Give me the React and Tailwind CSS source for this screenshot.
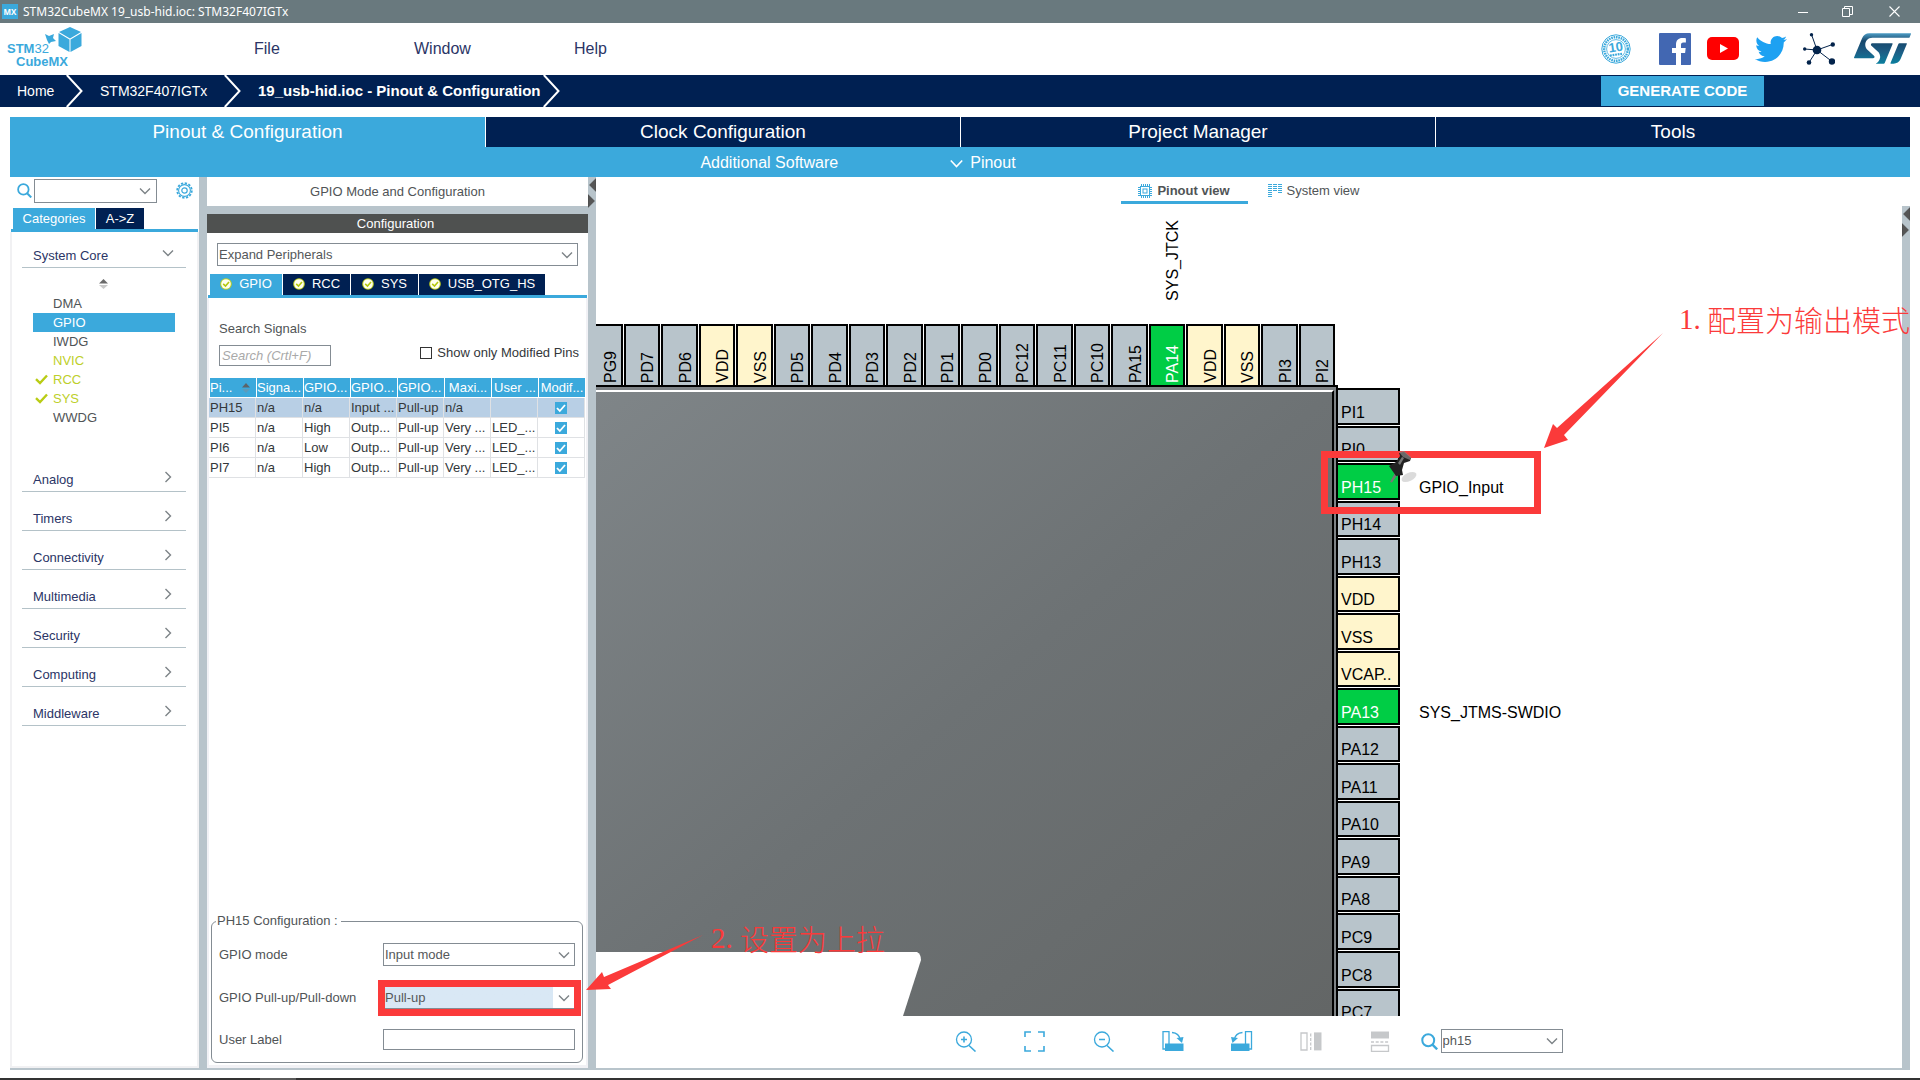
import React from "react";
import { FaTwitter } from "react-icons/fa";
import { SiStmicroelectronics } from "react-icons/si";

const SOCIAL_BLUE = "#3ba9dc";

function Chevron({ className = "" }) {
  return (
    <svg viewBox="0 0 12 12" className={className} width="12" height="12" fill="none" stroke="#7d8387" strokeWidth="1.4">
      <path d="M1 3.5 6 8.5 11 3.5" />
    </svg>
  );
}

function SearchIcon({ size = 15 }) {
  return (
    <svg viewBox="0 0 16 16" width={size} height={size} fill="none" stroke={SOCIAL_BLUE} strokeWidth="1.9">
      <circle cx="6.8" cy="6.8" r="5.6" />
      <path d="m10.8 11 4.4 4.4" strokeWidth="2.2" />
    </svg>
  );
}

function Select({ label, id, value, className = "", selectClass = "", chevronClass = "right-[4px]" }) {
  return (
    <div className={"relative " + className}>
      <select
        id={id}
        aria-label={label}
        defaultValue={value}
        className={"block h-full w-full appearance-none border border-[#848c93] bg-white pl-[1px] text-[13px] leading-4 text-[#55585a] " + selectClass}
      >
        <option>{value}</option>
      </select>
      <Chevron className={"pointer-events-none absolute top-1/2 -translate-y-1/2 " + chevronClass} />
    </div>
  );
}

function TitleBar() {
  return (
    <div className="flex h-[23px] shrink-0 items-center bg-[#69797e] pl-[2px] text-white">
      <span className="flex h-[15px] w-[16px] items-center justify-center bg-[#3ba9dc] font-['Open_Sans',sans-serif] text-[8px] font-bold">MX</span>
      <h1 className="ml-[5px] flex-1 font-['Noto_Sans',sans-serif] text-[12px] leading-5">STM32CubeMX 19_usb-hid.ioc: STM32F407IGTx</h1>
      <button aria-label="Minimize" className="flex h-full w-[45px] items-center justify-center">
        <svg width="10" height="10" viewBox="0 0 10 10" stroke="#fff"><path d="M0 5.5h10" /></svg>
      </button>
      <button aria-label="Restore" className="flex h-full w-[45px] items-center justify-center">
        <svg width="11" height="11" viewBox="0 0 11 11" fill="none" stroke="#fff"><path d="M.5 2.5h7v8h-7zM2.5 2.5v-2h8v8h-3" /></svg>
      </button>
      <button aria-label="Close" className="flex h-full w-[50px] items-center justify-center pr-[2px]">
        <svg width="11" height="11" viewBox="0 0 11 11" stroke="#fff" strokeWidth="1.1"><path d="M.5.5l10 10M10.500.5l-10 10" /></svg>
      </button>
    </div>
  );
}

function CubeLogo() {
  return (
    <svg width="78" height="44" viewBox="0 0 78 44" fill="#3ba9dc" fontFamily="'Liberation Sans', sans-serif" fontSize="13">
      <text x="0" y="26"><tspan fontWeight="700">STM</tspan>32</text>
      <text x="9" y="39" fontWeight="700">CubeMX</text>
      <path d="M63 0 74 5 63 11.500 52 5z" />
      <path d="M51.500 6 62.500 12.500V25L51.500 19z" />
      <path d="M74.500 6 63.500 12.500V25L74.500 19z" />
      <path d="M38 7l4 2 5-2-1 4 3 3-5 1-2 2-2-4z" />
    </svg>
  );
}

function Header() {
  return (
    <header className="flex h-[52px] shrink-0 items-center bg-white">
      <div className="w-[254px] pl-[7px]"><CubeLogo /></div>
      <nav className="flex flex-1 pb-[1px] text-[16px] leading-5 text-[#2b3566]">
        <button className="w-[160px] text-left">File</button>
        <button className="w-[160px] text-left">Window</button>
        <button className="text-left">Help</button>
      </nav>
      <div className="flex items-center pr-[9px] pb-[1px]">
        <a href="#anniversary" aria-label="10 years" className="mr-[28px]">
          <svg width="30" height="30" viewBox="0 0 30 30" fill="none" stroke="#3ba9dc">
            <circle cx="15" cy="15" r="14.200" strokeWidth="1" />
            <circle cx="15" cy="15" r="11.800" strokeWidth="2.400" strokeDasharray="1.600 .8" />
            <circle cx="15" cy="15" r="9.400" strokeWidth=".8" />
            <text x="15" y="17.500" transform="rotate(-8 15 15)" textAnchor="middle" fontFamily="'Liberation Sans', sans-serif" fontWeight="700" fontSize="13" fill="#3ba9dc" stroke="none">10</text>
            <path d="M9 21.500l12-1.700" strokeWidth="2.200" strokeDasharray="1.800 .8" />
          </svg>
        </a>
        <a href="#facebook" aria-label="Facebook" className="mr-[16px]">
          <svg width="32" height="32" viewBox="0 0 32 32">
            <rect width="32" height="32" rx="1" fill="#4267b2" />
            <path d="M17 32V20h-4v-5h4v-3.500C17 7.300 19.500 5 23.300 5c1.700 0 3.100.1 3.600.2v4.300h-2.500c-2 0-2.400 1-2.400 2.300V15h4.700l-.6 5H22v12z" fill="#fff" />
          </svg>
        </a>
        <a href="#youtube" aria-label="YouTube" className="mr-[16px]">
          <svg width="32" height="23" viewBox="0 0 32 23">
            <rect width="32" height="23" rx="5" fill="#f00" />
            <path d="M13 7v9l8-4.500z" fill="#fff" />
          </svg>
        </a>
        <a href="#twitter" aria-label="Twitter" className="mr-[16px]"><FaTwitter size={32} color="#1da1f2" /></a>
        <a href="#community" aria-label="Community" className="mr-[19px]">
          <svg width="32" height="32" viewBox="0 0 32 32" fill="#03234b" stroke="#03234b">
            <path d="M8.500 1.500 14 17l15.500-5.500M1.500 16 14 17l15 11.500M14 17 6 29.500" fill="none" />
            <g stroke="none"><circle cx="14" cy="17" r="4.300" /><circle cx="8.500" cy="1.800" r="1.700" /><circle cx="29.800" cy="11.500" r="2.200" /><circle cx="1.700" cy="16" r="1.700" /><circle cx="6" cy="29.500" r="2.300" /><circle cx="29" cy="28.500" r="3.200" /></g>
          </svg>
        </a>
        <a href="#st" aria-label="STMicroelectronics" className="flex h-[32px] items-center">
          <svg width="0" height="0"><defs><linearGradient id="st" x1="0" y1="0" x2="0" y2="1"><stop offset="0" stopColor="#4d9cc4" /><stop offset=".25" stopColor="#17476b" /><stop offset=".6" stopColor="#1d5c84" /><stop offset="1" stopColor="#0b7f9e" /></linearGradient></defs></svg>
          <SiStmicroelectronics size={57} fill="url(#st)" />
        </a>
      </div>
    </header>
  );
}

function CrumbArrow() {
  return (
    <svg width="17" height="32" viewBox="0 0 17 32" fill="none" stroke="#fff" strokeWidth="2" className="shrink-0"><path d="M.8 0 15.500 16 .8 32" /></svg>
  );
}

function Breadcrumbs() {
  return (
    <nav className="flex h-[32px] shrink-0 items-center bg-[#002052] text-[14px] text-white">
      <a href="#home" className="w-[66px] pl-[17px]">Home</a>
      <CrumbArrow />
      <a href="#mcu" className="w-[141px] pl-[17px]">STM32F407IGTx</a>
      <CrumbArrow />
      <a href="#pinout" className="w-[302px] pl-[17px] text-[15px] font-bold whitespace-nowrap">19_usb-hid.ioc - Pinout &amp; Configuration</a>
      <CrumbArrow />
      <button className="mr-[156px] ml-auto h-[30px] w-[163px] bg-[#3ba9dc] text-[15px] font-bold">GENERATE CODE</button>
    </nav>
  );
}

const MAIN_TABS = ["Pinout & Configuration", "Clock Configuration", "Project Manager", "Tools"];

function MainTabs() {
  return (
    <div className="mx-[10px] mt-[10px] shrink-0">
      <div className="grid h-[30px] grid-cols-4">
        {MAIN_TABS.map((t, i) => (
          <button key={t} className={"border-white text-[19px] leading-[30px] text-white " + (i === 0 ? "bg-[#3ba9dc]" : "border-l bg-[#002052]")}>{t}</button>
        ))}
      </div>
      <div className="flex h-[30px] items-center justify-center gap-[112px] bg-[#3ba9dc] pt-[2px] pr-[204px] text-[16px] text-white">
        <button>Additional Software</button>
        <button className="flex items-center gap-[7px]">
          <svg width="13" height="9" viewBox="0 0 13 9" fill="none" stroke="#fff" strokeWidth="1.600"><path d="M.8 1.500 6.500 7.500 12.200 1.500" /></svg>
          Pinout
        </button>
      </div>
    </div>
  );
}

function Check() {
  return (
    <svg width="13" height="11" viewBox="0 0 13 11" fill="none" stroke="#b9cc14" strokeWidth="2.400"><path d="M1 5.200 5 9 12 1.500" /></svg>
  );
}

const CORE = [["DMA"], ["GPIO", "sel"], ["IWDG"], ["NVIC", "on"], ["RCC", "ok"], ["SYS", "ok"], ["WWDG"]];
const GROUPS = ["Analog", "Timers", "Connectivity", "Multimedia", "Security", "Computing", "Middleware"];

function Sidebar() {
  return (
    <aside className="flex w-[189px] shrink-0 flex-col">
      <div className="flex h-[31px] items-start pl-[7px]">
        <span className="pt-[6px]"><SearchIcon /></span>
        <Select label="Search peripherals" value="" className="mt-[2px] ml-[2px] h-[24px] w-[123px]" chevronClass="right-[6px]" />
        <button aria-label="Settings" className="mt-[5px] ml-[19px]">
          <svg width="17" height="17" viewBox="0 0 17 17" fill="none" stroke="#3ba9dc">
            <circle cx="8.500" cy="8.500" r="7.300" strokeWidth="1.800" strokeDasharray="2.300 1.522" />
            <circle cx="8.500" cy="8.500" r="5.900" strokeWidth="1.100" />
            <circle cx="8.500" cy="8.500" r="2.700" strokeWidth="1.200" />
          </svg>
        </button>
      </div>
      <div className="mr-[1px] ml-[1px] flex h-[24px] gap-px border-b-[3px] border-[#3ba9dc] pl-[2px] text-[13px] leading-5 text-white">
        <button className="w-[82px] bg-[#3ba9dc]">Categories</button>
        <button className="w-[48px] bg-[#002052]">A-&gt;Z</button>
      </div>
      <div className="flex-1 border-x-[2px] border-b-[2px] border-[#f1f1f3] text-[13px]">
        <div className="pr-[11px] pl-[10px]">
          <button className="flex h-[36px] w-full items-end border-b border-[#b4c2c8] pb-[3px] pl-[11px] leading-4 text-[#2b3566]">
            <span className="flex-1 text-left">System Core</span>
            <Chevron className="mr-[12px] mb-[5px]" />
          </button>
        </div>
        <div className="flex h-[26px] items-center justify-center pt-[6px] pr-[3px]">
          <svg width="9" height="10" viewBox="0 0 9 10"><path d="M0 4.500 4.500 0 9 4.500z" fill="#6a6a6a" /><path d="M0 6h9L4.500 10z" fill="#c9c9c9" /></svg>
        </div>
        <ul className="pr-[22px] pl-[21px]">
          {CORE.map(([n, s]) => (
            <li key={n}>
              <button className={"flex h-[19px] w-full items-center text-left leading-4 " + (s === "sel" ? "bg-[#3ba9dc] text-white" : s ? "text-[#bdcf2a]" : "text-[#505456]")}>
                <span className="w-[20px] pl-[2px]">{s === "ok" && <Check />}</span>
                {n}
              </button>
            </li>
          ))}
        </ul>
        <div className="pt-[26px] pr-[11px] pl-[10px]">
          {GROUPS.map((g) => (
            <button key={g} className="flex h-[39px] w-full items-end border-b border-[#b4c2c8] pb-[3px] pl-[11px] leading-4 text-[#2b3566]">
              <span className="flex-1 text-left">{g}</span>
              <svg width="12" height="12" viewBox="0 0 12 12" fill="none" stroke="#7d8387" strokeWidth="1.400" className="mr-[12px] mb-[5px]"><path d="M3.500 1 8.500 6 3.500 11" /></svg>
            </button>
          ))}
        </div>
      </div>
    </aside>
  );
}

function SplitArrows() {
  return (
    <svg width="8" height="32" viewBox="0 0 8 32" fill="#555" stroke="#3f3f3f" strokeWidth=".5"><path d="M8 1.500v13L1.500 8z" /><path d="M0 17.500v13L6.500 24z" /></svg>
  );
}

const IP_TABS = [["GPIO", "w-[72px]"], ["RCC", "w-[67px]"], ["SYS", "w-[67px]"], ["USB_OTG_HS", "w-[126px]"]];
const HEAD = ["Pi...", "Signa...", "GPIO...", "GPIO...", "GPIO...", "Maxi...", "User ...", "Modif..."];
const ROWS = [
  ["PH15", "n/a", "n/a", "Input ...", "Pull-up", "n/a", ""],
  ["PI5", "n/a", "High", "Outp...", "Pull-up", "Very ...", "LED_..."],
  ["PI6", "n/a", "Low", "Outp...", "Pull-up", "Very ...", "LED_..."],
  ["PI7", "n/a", "High", "Outp...", "Pull-up", "Very ...", "LED_..."],
];

function PinTable() {
  return (
    <table className="mt-[12px] w-full table-fixed border-separate border-spacing-0 text-[13px] leading-4 whitespace-nowrap">
      <thead>
        <tr>
          {HEAD.map((h, i) => (
            <th key={i} className={"h-[20px] border-b border-l border-white bg-[#3ba9dc] p-0 font-normal text-white " + (i >= 5 ? "text-center" : "text-left")}>
              {i === 0 ? (
                <span className="flex items-center justify-between pr-[6px]">
                  {h}
                  <svg width="8" height="10" viewBox="0 0 8 10"><path d="M0 4.500 4 0 8 4.500z" fill="#5d6468" /><path d="M0 6h8L4 10z" fill="#5c9bbb" /></svg>
                </span>
              ) : h}
            </th>
          ))}
        </tr>
      </thead>
      <tbody>
        {ROWS.map((r, ri) => (
          <tr key={r[0]} className={ri === 0 ? "bg-[#b8cfe5]" : "bg-white"}>
            {r.map((c, i) => (
              <td key={i} className="h-[20px] border-r border-b border-[#dfe1e4] p-0 pl-px text-[#33373a]">{c}</td>
            ))}
            <td className="h-[20px] border-r border-b border-[#dfe1e4] p-0">
              <span className="relative mx-auto block h-[12px] w-[12px]">
                <input type="checkbox" defaultChecked aria-label={"Modified " + r[0]} className="block h-[12px] w-[12px] appearance-none bg-[#3ba9dc]" />
                <svg className="pointer-events-none absolute inset-0" width="12" height="12" viewBox="0 0 12 12" fill="none" stroke="#fff" strokeWidth="1.800"><path d="M2 6 4.800 9 10 3" /></svg>
              </span>
            </td>
          </tr>
        ))}
      </tbody>
    </table>
  );
}

function ConfigPanel() {
  return (
    <section className="flex w-[381px] shrink-0 flex-col bg-white text-[13px] leading-4 text-[#505456]">
      <h2 className="h-[29px] pt-[7px] text-center">GPIO Mode and Configuration</h2>
      <h3 className="h-[27px] border-t-[8px] border-[#b8c4cb] bg-[#4f5150] pt-[2px] pr-[4px] text-center text-white">Configuration</h3>
      <Select label="Group by" value="Expand Peripherals" className="mx-[10px] mt-[10px] h-[23px]" chevronClass="right-[5px]" />
      <div className="mx-[1px] mt-[8px] flex h-[24px] gap-px border-b-[3px] border-[#3ba9dc] pl-[2px]">
        {IP_TABS.map(([t, w], i) => (
          <button key={t} className={"flex items-center justify-center gap-[7px] pb-px text-white " + w + (i === 0 ? " bg-[#3ba9dc]" : " bg-[#002052]")}>
            <svg width="12" height="12" viewBox="0 0 12 12"><circle cx="6" cy="6" r="5.800" fill="#c3d21d" /><circle cx="6" cy="6" r="4.800" fill="#fffff0" /><path d="M3.200 5.800 5.500 8 9 4" fill="none" stroke="#b5c80e" strokeWidth="1.600" /></svg>
            {t}
          </button>
        ))}
      </div>
      <div className="flex flex-1 flex-col border-x-[2px] border-b-[3px] border-[#f1f1f5] pr-[1px]">
        <div className="pt-[23px] pr-[6px] pl-[10px]">
          <label htmlFor="signals">Search Signals</label>
          <div className="mt-[8px] flex h-[21px] items-start justify-between">
            <input id="signals" placeholder="Search (Crtl+F)" className="h-[21px] w-[112px] border border-[#848c93] pl-[2px] text-[13px] italic placeholder:text-[#a9a9a9]" />
            <label className="flex items-center gap-[5px] text-[#33373a]">
              <input type="checkbox" className="h-[12px] w-[12px] appearance-none border border-[#333] bg-white" />
              Show only Modified Pins
            </label>
          </div>
        </div>
        <PinTable />
        <fieldset className="mt-auto mr-[2px] mb-[2px] ml-[2px] h-[150px] rounded-[6px] border border-[#848c93] px-[7px]">
          <legend className="-ml-[3px] pr-[3px] pl-px">PH15 Configuration :</legend>
          <div className="mt-[14px] flex h-[23px] items-center justify-between">
            <label htmlFor="mode">GPIO mode</label>
            <Select id="mode" value="Input mode" className="h-[23px] w-[192px]" chevronClass="right-[5px]" />
          </div>
          <div className="mt-[20px] flex h-[23px] items-center justify-between">
            <label htmlFor="pull">GPIO Pull-up/Pull-down</label>
            <div className="relative">
              <Select id="pull" value="Pull-up" className="h-[23px] w-[192px]" selectClass="bg-linear-to-r from-[#d9e8f5] from-89% to-white to-89%" chevronClass="right-[5px]" />
              <div className="pointer-events-none absolute -top-[6px] -left-[5px] h-[36px] w-[203px] border-[7px] border-[#fb3a3a]" />
            </div>
          </div>
          <div className="mt-[20px] flex h-[21px] items-center justify-between">
            <label htmlFor="ulabel">User Label</label>
            <input id="ulabel" className="h-[21px] w-[192px] border border-[#848c93] px-1" />
          </div>
        </fieldset>
      </div>
    </section>
  );
}

const TOP = ["PG9", "PD7", "PD6", "VDD", "VSS", "PD5", "PD4", "PD3", "PD2", "PD1", "PD0", "PC12", "PC11", "PC10", "PA15", "PA14", "VDD", "VSS", "PI3", "PI2"];
const RIGHT = ["PI1", "PI0", "PH15", "PH14", "PH13", "VDD", "VSS", "VCAP..", "PA13", "PA12", "PA11", "PA10", "PA9", "PA8", "PC9", "PC8", "PC7"];
const SIGNALS = { PA14: "SYS_JTCK", PH15: "GPIO_Input", PA13: "SYS_JTMS-SWDIO" };

function pinColor(n) {
  if (SIGNALS[n]) return "bg-[#00cd45] text-white";
  if (n[0] === "V") return "bg-[#fff5cc] text-black";
  return "bg-[#b8c4cb] text-black";
}

function PinTack() {
  return (
    <svg width="32" height="36" viewBox="0 0 32 36" className="absolute -top-[16px] -right-[21px] z-20">
      <ellipse cx="22" cy="28" rx="8" ry="4" fill="#999" opacity=".35" transform="rotate(-25 22 28)" />
      <path d="M8 24 3 33l2 .5L11 25z" fill="#777" />
      <path d="M2 17l7-4 4-6-1-3 5-1 7 6-1 3-6 2-2 7 1 5-7 1z" fill="#222" />
      <path d="M12 3l5-1 7 6-1 3-7-3z" fill="#888" opacity=".7" />
      <path d="M11 14l4-6 2 1-4 7z" fill="#777" />
    </svg>
  );
}

function Chip() {
  return (
    <div className="flex h-full pt-[118px]">
      <div className="relative flex w-[742px] shrink-0 flex-col items-end">
        <div className="mr-[3px] flex h-[61px] w-[749px] gap-px">
          {TOP.map((n, i) => (
            <div key={i} className={"relative flex-1 border-2 border-b-0 border-black " + pinColor(n)}>
              <span className="absolute right-[1px] bottom-[2px] rotate-180 leading-[18px] [writing-mode:vertical-rl]">{n}</span>
              {SIGNALS[n] && <span className="absolute right-[1px] bottom-[84px] rotate-180 leading-[18px] text-black [writing-mode:vertical-rl]">{SIGNALS[n]}</span>}
            </div>
          ))}
        </div>
        <div className="w-full flex-1 border-t-2 border-r-2 border-black bg-[#7d8285] pt-[3px] pr-[2px]">
          <div className="relative h-full border-t-2 border-r-2 border-t-white border-r-black bg-linear-to-br from-[#7f8588] via-[#6d7274] to-[#636666]">
            <svg width="325" height="64" viewBox="0 0 325 64" className="absolute bottom-0 left-0"><path d="M0 0H321Q325 2 325 8L307 64H0z" fill="#fff" /></svg>
          </div>
        </div>
      </div>
      <div className="mt-[64px] flex h-[637px] w-[62px] shrink-0 flex-col gap-px">
        {RIGHT.map((n, i) => (
          <div key={i} className={"relative flex-1 border-2 border-l-0 border-black " + pinColor(n)}>
            <span className="absolute bottom-[1px] left-[3px] leading-[18px]">{n}</span>
            {SIGNALS[n] && <span className="absolute bottom-[1px] left-[81px] leading-[18px] whitespace-nowrap text-black">{SIGNALS[n]}</span>}
            {n === "PH15" && <PinTack />}
            {n === "PH15" && <div className="absolute -top-[14px] -left-[17px] z-10 h-[63px] w-[220px] border-[7px] border-[#fb3a3a]" />}
          </div>
        ))}
      </div>
    </div>
  );
}

const B = "#3ba9dc";
const G = "#c6c8ca";
const TOOLS = [
  ["Zoom in", <g key="a" fill="none" stroke={B} strokeWidth="1.300"><circle cx="9" cy="8.500" r="7.500" /><path d="m14 14.500 6.500 6M6 8.500h6M9 5.500v6" strokeWidth="1.600" /></g>],
  ["Best fit", <path key="b" d="M1 6V1h6M14 1h6v5M20 15v5h-6M7 20H1v-5" fill="none" stroke={B} strokeWidth="1.600" />],
  ["Zoom out", <g key="c" fill="none" stroke={B} strokeWidth="1.300"><circle cx="9" cy="8.500" r="7.500" /><path d="m14 14.500 6.500 6M6 8.500h6" strokeWidth="1.600" /></g>],
  ["Rotate right", <g key="d"><path d="M1 .7h6V18H1zM10 1.500Q17 2 18.500 9" fill="none" stroke={B} strokeWidth="1.300" /><path d="M14.500 7 21.500 6 20 12z" fill={B} /><path d="M3 12.500h18.500V20H3z" fill={B} /></g>],
  ["Rotate left", <g key="e"><path d="M14.500.7h6V18h-6zM11.500 1.500Q4.500 2 3 9" fill="none" stroke={B} strokeWidth="1.300" /><path d="M7 7 0 6 1.500 12z" fill={B} /><path d="M0 12.500h18.500V20H0z" fill={B} /></g>],
  ["Flip horizontal", <g key="f"><path d="M1 2h6v17H1zM10.700 2v17" fill="none" stroke={G} strokeWidth="1.300" /><path d="M10.700 1v18" stroke="#fff" strokeWidth="2" strokeDasharray="1.500 3" /><path d="M14 1.400h7.500v18H14z" fill={G} /></g>],
  ["Flip vertical", <g key="h"><path d="M2 .5h18v7H2z" fill={G} /><path d="M2 11h18" stroke={G} strokeWidth="1.300" strokeDasharray="3 1.700" /><path d="M2.500 14.500h17v6h-17z" fill="none" stroke={G} strokeWidth="1.300" /></g>],
];

function PinoutCanvas() {
  return (
    <section className="relative flex min-w-0 flex-1 text-[13px] text-[#505456]">
      <div className="flex min-w-0 flex-1 flex-col">
        <div className="flex h-[29px] shrink-0 justify-center">
          <button className="flex h-[27px] w-[127px] items-center justify-center gap-[5px] border-b-[3px] border-[#3ba9dc] pt-[4px] font-bold">
            <svg width="14" height="14" viewBox="0 0 14 14" fill="none" stroke="#3ba9dc"><rect x="2.500" y="2.500" width="9" height="9" /><rect x="5" y="5" width="4" height="4" /><path d="M3 1h9M3 13h9M1 3v9M13 3v9" strokeWidth="2" strokeDasharray="1 1" /></svg>
            Pinout view
          </button>
          <button className="flex h-[27px] items-center gap-[5px] pt-[1px] pl-[20px]">
            <svg width="14" height="14" viewBox="0 0 14 14" stroke="#3ba9dc" strokeWidth="4"><path d="M2 0v13" strokeDasharray="1 1" /><path d="M7 0v7M12 0v9" strokeDasharray="1 1" /></svg>
            System view
          </button>
          <span className="w-[18px]" />
        </div>
        <div className="min-h-0 flex-1 overflow-hidden text-[16px]"><Chip /></div>
        <div className="flex h-[52px] shrink-0 items-start justify-center pt-[13px] pr-[4px]">
          {TOOLS.map(([l, g]) => (
            <button key={l} aria-label={l} className="flex h-[24px] w-[69px] items-center justify-center">
              <svg width="22" height="21" viewBox="0 0 22 21">{g}</svg>
            </button>
          ))}
          <span className="pt-[4px] pl-[6px]"><SearchIcon size={17} /></span>
          <Select label="Find pin" value="ph15" className="ml-[3px] h-[24px] w-[122px]" chevronClass="right-[5px]" />
        </div>
      </div>
      <div className="mt-[29px] w-[8px] shrink-0 bg-[#b8c4cb]"><SplitArrows /></div>
      <p className="absolute top-[124px] right-0 z-10 flex font-['Noto_Sans_CJK_SC',sans-serif] text-[29px] leading-[36px] font-light whitespace-nowrap text-[#fb3a3a]">
        <span className="w-[28px] font-['Liberation_Serif',serif] font-normal">1.</span>配置为输出模式
      </p>
      <svg width="122" height="117" viewBox="0 0 122 117" className="pointer-events-none absolute top-[155px] left-[947px]" fill="#fb3a3a"><path d="M1 116 10 92 14 96 120 1 21 103 25 108z" /></svg>
      <p className="absolute top-[743px] left-[115px] z-10 flex font-['Noto_Sans_CJK_SC',sans-serif] text-[29px] leading-[36px] font-light whitespace-nowrap text-[#fb3a3a]">
        <span className="w-[29px] font-['Liberation_Serif',serif] font-normal">2.</span>设置为上拉
      </p>
      <svg width="118" height="56" viewBox="0 0 118 56" className="pointer-events-none absolute top-[758px] -left-[10px] z-10" fill="#fb3a3a"><path d="M0 55 16 37 18 42 117 0 22 50 25 54z" /></svg>
    </section>
  );
}

export default function App() {
  return (
    <div className="flex h-screen flex-col overflow-hidden bg-white font-['Liberation_Sans',Arial,sans-serif]">
      <TitleBar />
      <Header />
      <Breadcrumbs />
      <MainTabs />
      <main className="mx-[10px] flex min-h-0 flex-1 border-b-2 border-[#b8c4cb]">
        <Sidebar />
        <div className="w-[8px] shrink-0 bg-[#b8c4cb]" />
        <ConfigPanel />
        <div className="w-[8px] shrink-0 bg-[#b8c4cb]"><SplitArrows /></div>
        <PinoutCanvas />
      </main>
      <div className="mt-[8px] h-[2px] shrink-0 bg-[#333] pl-[260px]"><div className="h-full w-[36px] bg-[#5a5a5a]" /></div>
    </div>
  );
}
